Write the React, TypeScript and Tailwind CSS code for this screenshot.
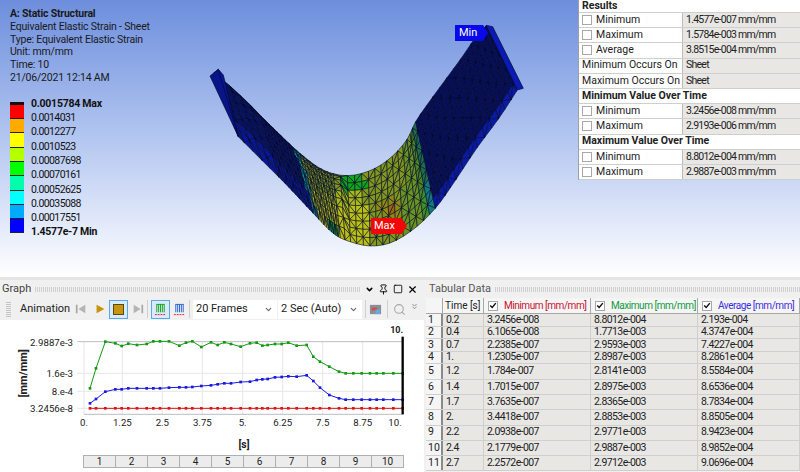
import React from 'react';
import { Pin, Square, X, ChevronDown, ChevronsDown, Search } from 'lucide-react';

const FONT = "font-['Roboto',sans-serif]";

const LEGEND = [
  { color: '#ff0000', label: '0.0015784 Max', bold: true },
  { color: '#ffaa00', label: '0.0014031' },
  { color: '#ffff00', label: '0.0012277' },
  { color: '#b4ff00', label: '0.0010523' },
  { color: '#00ff00', label: '0.00087698' },
  { color: '#00ffaa', label: '0.00070161' },
  { color: '#00ffff', label: '0.00052625' },
  { color: '#00aaff', label: '0.00035088' },
  { color: '#0000ff', label: '0.00017551' },
  { color: null, label: '1.4577e-7 Min', bold: true },
];

type ResultRow = { kind: 'head'; label: string } | { kind: 'check' | 'plain'; label: string; value: string };

const RESULTS: ResultRow[] = [
  { kind: 'head', label: 'Results' },
  { kind: 'check', label: 'Minimum', value: '1.4577e-007 mm/mm' },
  { kind: 'check', label: 'Maximum', value: '1.5784e-003 mm/mm' },
  { kind: 'check', label: 'Average', value: '3.8515e-004 mm/mm' },
  { kind: 'plain', label: 'Minimum Occurs On', value: 'Sheet' },
  { kind: 'plain', label: 'Maximum Occurs On', value: 'Sheet' },
  { kind: 'head', label: 'Minimum Value Over Time' },
  { kind: 'check', label: 'Minimum', value: '3.2456e-008 mm/mm' },
  { kind: 'check', label: 'Maximum', value: '2.9193e-006 mm/mm' },
  { kind: 'head', label: 'Maximum Value Over Time' },
  { kind: 'check', label: 'Minimum', value: '8.8012e-004 mm/mm' },
  { kind: 'check', label: 'Maximum', value: '2.9887e-003 mm/mm' },
];

const TABLE = [
  ['0.2', '3.2456e-008', '8.8012e-004', '2.193e-004'],
  ['0.4', '6.1065e-008', '1.7713e-003', '4.3747e-004'],
  ['0.7', '2.2385e-007', '2.9593e-003', '7.4227e-004'],
  ['1.', '1.2305e-007', '2.8987e-003', '8.2861e-004'],
  ['1.2', '1.784e-007', '2.8141e-003', '8.5584e-004'],
  ['1.4', '1.7015e-007', '2.8975e-003', '8.6536e-004'],
  ['1.7', '3.7635e-007', '2.8365e-003', '8.7834e-004'],
  ['2.', '3.4418e-007', '2.8853e-003', '8.8505e-004'],
  ['2.2', '2.0938e-007', '2.9771e-003', '8.9423e-004'],
  ['2.4', '2.1779e-007', '2.9887e-003', '8.9852e-004'],
  ['2.7', '2.2572e-007', '2.9712e-003', '9.0696e-004'],
];

// mesh outline, in 3x crop coords (origin 190,20)
const TOP = [[72,158],[150,225],[240,315],[330,400],[400,450],[470,467],[540,452],[600,415],[650,360],[680,300],[740,215],[810,120],[860,48],[890,16]];
const BOT = [[145,350],[215,420],[290,495],[370,580],[430,640],[480,665],[545,678],[610,665],[680,620],[740,560],[790,490],[860,385],[930,290],[985,205]];

function along(line: number[][], t: number) {
  const n = line.length - 1;
  const i = Math.min(Math.floor(t), n - 1);
  const f = t - i;
  const p0 = line[Math.max(i - 1, 0)];
  const p1 = line[i];
  const p2 = line[i + 1];
  const p3 = line[Math.min(i + 2, n)];
  const cr = (k: number) =>
    0.5 * (2 * p1[k] + (p2[k] - p0[k]) * f + (2 * p0[k] - 5 * p1[k] + 4 * p2[k] - p3[k]) * f * f + (3 * p1[k] - p0[k] - 3 * p2[k] + p3[k]) * f * f * f);
  return [cr(0), cr(1)];
}

function meshColor(t: number, v: number, x: number, y: number) {
  if (t < 2.7 + v * 0.3) return v > 0.76 ? '#08169a' : '#071266';
  if (t > 9.05) return v > 0.84 ? '#0a1aa8' : '#070f58';
  if (t < 2.9 + v * 0.35) return v > 0.75 ? '#107e86' : '#128c8c';
  if (t > 8.75) return v > 0.72 ? '#127a80' : '#1e6e4c';
  if (t > 8.3) return v > 0.7 ? '#3f8f28' : '#4a8420';
  const hot = Math.hypot(x - 600, y - 565);
  if (hot < 16) return '#a0640e';
  if (hot < 34) return '#8e8a12';
  if (Math.hypot(x - 495, y - 497) < 40 && y < 515) return '#12a41c';
  if (x < 445 && y > 610) return '#159a2c';
  if (y > 555 && x < 545) return '#bcc010';
  if (y > 520 && x < 520) return '#a8b814';
  if (x > 640) return '#6a9420';
  return '#82981c';
}

function buildMesh() {
  const tris: { pts: string; fill: string }[] = [];
  const ts: number[] = [];
  // elements get tighter around the left bend
  for (let t = 0; t < 12.85; t += t < 1.6 ? 0.34 : t < 4.4 ? 0.13 : 0.3) ts.push(t);
  ts.push(13);
  const nv = 9;
  const grid = (i: number, j: number) => {
    const a = along(TOP, ts[i]);
    const b = along(BOT, ts[i]);
    const dense = ts[i] < 5;
    const v = dense ? Math.pow(j / nv, 1.7) : j / nv;
    return [a[0] + (b[0] - a[0]) * v, a[1] + (b[1] - a[1]) * v];
  };
  for (let i = 0; i < ts.length - 1; i++) {
    for (let j = 0; j < nv; j++) {
      const p = grid(i, j);
      const q = grid(i + 1, j);
      const r = grid(i + 1, j + 1);
      const s = grid(i, j + 1);
      const t = (ts[i] + ts[i + 1]) / 2;
      const v = (j + 0.5) / nv;
      const fill = meshColor(t, v, (p[0] + r[0]) / 2, (p[1] + r[1]) / 2);
      const flip = (i + j) % 2 === 0;
      const a = flip ? [p, q, r] : [p, q, s];
      const b = flip ? [p, r, s] : [q, r, s];
      tris.push({ pts: a.map((c) => c.join(',')).join(' '), fill });
      tris.push({ pts: b.map((c) => c.join(',')).join(' '), fill });
    }
  }
  return tris;
}

const MESH = buildMesh();

const Mesh = () => (
  <svg className="absolute left-[190px] top-[20px] w-[350px] h-[240px]" viewBox="0 0 1050 720">
    {MESH.map((t, i) => (
      <polygon key={i} points={t.pts} fill={t.fill} stroke="#03082a" strokeWidth="2" strokeOpacity="0.9" />
    ))}
    <polygon points="72,158 85,148 100,165 145,350" fill="#08169a" stroke="#03082a" strokeWidth="2" />
    <polygon points="60,168 85,148 145,350" fill="#081488" stroke="#03082a" strokeWidth="2" />
    <polygon points="888,16 908,20 1000,205 982,210" fill="#0a1ab4" stroke="#03082a" strokeWidth="2" />
  </svg>
);

const CHART_X = [270,288,316,346,365,385,411,440,460,480,507,538,558,577,604,633,653,673,693,722,750,770,787,803,825,845,865,890,920,940,960,988,1017,1037,1060,1085,1110,1130,1150,1180,1208];
const GREEN = [190,130,50,55,63,56,60,57,49,49,49,62,53,49,66,52,60,52,57,65,55,53,62,60,57,57,53,62,60,95,110,125,140,145,145,145,145,145,145,145,145];
const BLUE = [235,222,200,193,193,190,190,190,190,190,188,187,187,186,183,181,178,175,175,171,170,165,163,162,157,156,154,155,151,168,188,210,220,224,224,224,224,224,224,224,224];

const Series = ({ ys, color }: { ys: number[]; color: string }) => (
  <g>
    <polyline points={CHART_X.map((x, i) => `${x},${ys[i]}`).join(' ')} fill="none" stroke={color} strokeWidth="3" />
    {CHART_X.map((x, i) => (
      <rect key={i} x={x - 4} y={ys[i] - 4} width="8" height="8" fill={color} />
    ))}
  </g>
);

const Chart = () => {
  const xticks: [number, string][] = [[252,'0.'],[367,'1.25'],[487,'2.5'],[607,'3.75'],[728,'5.'],[848,'6.25'],[968,'7.5'],[1088,'8.75'],[1185,'10.']];
  const xgrid = [252, 367, 487, 607, 728, 848, 968, 1088, 1208];
  const yticks: [number, string][] = [[50,'2.9887e-3'],[145,'1.6e-3'],[199,'8.e-4'],[250,'3.2456e-8']];
  return (
    <svg className="w-[424px] h-[128px] shrink-0 mt-[5px]" viewBox="0 0 1272 384">
      <g fontFamily="Roboto, sans-serif" fontSize="29" fill="#222">
        {xgrid.map((x) => (
          <line key={x} x1={x} x2={x} y1="50" y2="268" stroke="#e6e6e6" strokeWidth="3" />
        ))}
        {yticks.map(([y, l]) => (
          <g key={l}>
            <line x1="232" x2="1208" y1={y} y2={y} stroke={y === 50 ? '#bdbdbd' : '#e6e6e6'} strokeWidth="3" />
            <text x="219" y={y + 12} textAnchor="end">{l}</text>
          </g>
        ))}
        <line x1="252" x2="1208" y1="268" y2="268" stroke="#bdbdbd" strokeWidth="3" />
        {xticks.map(([x, l]) => (
          <text key={l} x={x} y="304" textAnchor="middle">{l}</text>
        ))}
        <text x="732" y="368" textAnchor="middle" fontWeight="700" fontSize="31">[s]</text>
        <text x="82" y="145" textAnchor="middle" fontWeight="700" fontSize="33" transform="rotate(-90 82 145)">[mm/mm]</text>
        <text x="1190" y="24" textAnchor="middle" fontWeight="700" fontSize="27">10.</text>
      </g>
      <Series ys={GREEN} color="#129a12" />
      <Series ys={BLUE} color="#1a1ae0" />
      <Series ys={CHART_X.map(() => 250)} color="#e01414" />
      <line x1="1208" x2="1208" y1="35" y2="268" stroke="#000" strokeWidth="7" />
    </svg>
  );
};

const Check = ({ on }: { on?: boolean }) => (
  <span className="w-[10px] h-[10px] border border-[#a8a8a8] bg-white shrink-0 flex items-center justify-center">
    {on && (
      <svg viewBox="0 0 10 10" className="w-[9px] h-[9px]">
        <path d="M1.5 5 L4 7.5 L8.5 2" fill="none" stroke="#111" strokeWidth="1.8" />
      </svg>
    )}
  </span>
);

const Grip = () => (
  <div className="flex-1 h-[5px] bg-[repeating-linear-gradient(90deg,#d0d0d0_0_1px,#f0f0f0_1px_2px)]" />
);

const ToolSep = () => <div className="w-px h-[18px] bg-[#cfcfcf] mx-[3px]" />;

const BarsIcon = ({ stroke }: { stroke: string }) => (
  <svg viewBox="0 0 14 14" className="w-[13px] h-[13px]">
    <path d="M2.5 1.5 H11.5 M3 1.5 V10 M7 1.5 V10 M11 1.5 V10 M5 1.5 V10 M9 1.5 V10" stroke={stroke} fill="none" />
    <path d="M1 12.5 H13" stroke="#e01414" strokeDasharray="2 1" fill="none" />
  </svg>
);

const Toolbar = () => (
  <div className="h-[22px] flex items-center pl-[6px] text-[11px] text-[#222]">
    <div className="w-[5px] h-[16px] bg-[repeating-linear-gradient(0deg,#c4c4c4_0_1px,#f0f0f0_1px_2px)] mr-[9px]" />
    <span className="w-[55px]">Animation</span>
    <svg viewBox="0 0 14 14" className="w-[12px] h-[12px] mr-[8px]">
      <rect x="1" y="2" width="2" height="10" fill="#a8a8a8" />
      <path d="M12 2 V12 L4 7 Z" fill="#b4b4b4" />
    </svg>
    <svg viewBox="0 0 14 14" className="w-[11px] h-[14px] mr-[3px]">
      <path d="M2 1.5 V12.5 L12 7 Z" fill="#c8920c" />
    </svg>
    <div className="w-[19px] h-[19px] border border-[#5aa6e6] bg-[#d8ebfa] flex items-center justify-center mr-[4px]">
      <div className="w-[11px] h-[11px] bg-[#c8960e] border border-[#5a4a10]" />
    </div>
    <svg viewBox="0 0 14 14" className="w-[12px] h-[12px]">
      <path d="M2 2 V12 L10 7 Z" fill="#b4b4b4" />
      <rect x="11" y="2" width="2" height="10" fill="#a8a8a8" />
    </svg>
    <ToolSep />
    <div className="w-[19px] h-[19px] border border-[#5aa6e6] bg-[#d8ebfa] flex items-center justify-center mr-[3px]">
      <BarsIcon stroke="#12a012" />
    </div>
    <BarsIcon stroke="#2060d0" />
    <ToolSep />
    <div className="w-[84px] h-[19px] bg-white flex items-center justify-between pl-[3px] pr-[4px]">
      <span>20 Frames</span>
      <ChevronDown size={9} strokeWidth={3} className="text-[#666]" />
    </div>
    <div className="w-[84px] h-[19px] bg-white flex items-center justify-between pl-[3px] pr-[4px] ml-px">
      <span>2 Sec (Auto)</span>
      <ChevronDown size={9} strokeWidth={3} className="text-[#666]" />
    </div>
    <ToolSep />
    <svg viewBox="0 0 14 14" className="w-[13px] h-[13px] mr-[2px]">
      <rect x="1" y="2" width="12" height="10" fill="#8a8f96" />
      <rect x="3" y="5" width="6" height="3" fill="#d84a4a" />
      <rect x="7" y="7" width="5" height="5" fill="#6aa8e0" />
    </svg>
    <ToolSep />
    <Search size={13} className="text-[#a8a8a8] ml-[2px]" />
    <ChevronsDown size={9} className="text-[#777] ml-[4px] -mt-[6px]" />
  </div>
);

const Graph = () => (
  <div className="w-[424px] flex flex-col bg-[#f0f0f0] shrink-0">
    <div className="h-[18px] flex items-center gap-[4px] pl-[2px] pr-[6px] text-[11px] text-[#444]">
      <span>Graph</span>
      <Grip />
      <ChevronDown size={9} strokeWidth={4} className="text-black" />
      <Pin size={11} className="text-black" />
      <Square size={10} className="text-black" />
      <X size={11} strokeWidth={2.5} className="text-black" />
    </div>
    <Toolbar />
    <div className="flex-1 bg-white flex flex-col overflow-hidden">
      <Chart />
      <div className="flex ml-[83px] w-[321px] h-[13px] border border-[#b0b0b0] bg-[#ececec] mt-[2px]">
        {[1, 2, 3, 4, 5, 6, 7, 8, 9, 10].map((n) => (
          <div key={n} className="flex-1 flex items-center justify-center text-[10px] text-[#222] border-r border-[#b0b0b0] last:border-r-0">
            {n}
          </div>
        ))}
      </div>
    </div>
  </div>
);

const TabularData = () => {
  const cols = 'grid grid-cols-[17px_41px_107px_107px_1fr]';
  const Head = ({ label, color }: { label: string; color: string }) => (
    <div className="flex items-center gap-[6px] pl-[4px] border-r border-[#a8a8a8] whitespace-nowrap">
      <Check on />
      <span className={color}>{label}</span>
    </div>
  );
  return (
    <div className="flex-1 flex flex-col bg-[#f0f0f0] ml-[2px] min-w-0">
      <div className="h-[18px] flex items-center gap-[4px] pl-[3px] text-[11px] text-[#555]">
        <span>Tabular Data</span>
        <Grip />
      </div>
      <div className={`${cols} h-[16px] bg-[#f5f5f5] text-[10px] tracking-[-0.45px] text-[#222] border-b border-[#a8a8a8]`}>
        <div className="border-r border-[#a8a8a8]" />
        <div className="flex items-center pl-[2px] border-r border-[#a8a8a8] whitespace-nowrap tracking-normal">Time [s]</div>
        <Head label="Minimum [mm/mm]" color="text-[#c8102e]" />
        <Head label="Maximum [mm/mm]" color="text-[#0e9a3a]" />
        <Head label="Average [mm/mm]" color="text-[#3a2ee0]" />
      </div>
      {TABLE.map((row, i) => (
        <div key={i} className={`${cols} ${i < 4 ? 'h-[12.6px]' : 'h-[15.3px]'} text-[10.5px] text-[#222] border-b border-[#cfcfcf] items-center`}>
          <div className="pl-[2px] leading-none bg-[#f5f5f5] h-full flex items-center border-r-2 border-[#8a8a8a]">{i + 1}</div>
          {row.map((c, j) => (
            <div key={j} className="pl-[3px] h-full flex items-center bg-[#e8e7e4] border-r border-[#cfcfcf] leading-none tracking-[-0.6px]">{c}</div>
          ))}
        </div>
      ))}
    </div>
  );
};

const ResultsPanel = () => (
  <div className="absolute right-0 top-0 w-[222px] flex flex-col bg-white text-[10.5px] text-[#222] border-l border-[#a0a0a0]">
    {RESULTS.map((r, i) =>
      r.kind === 'head' ? (
        <div key={i} className={`${i === 0 ? 'h-[13px]' : 'h-[15.2px]'} flex items-center pl-[3px] font-bold border-b border-[#cfcfcf] leading-none`}>{r.label}</div>
      ) : (
        <div key={i} className="h-[15.2px] flex border-b border-[#cfcfcf] leading-none">
          <div className="w-[104px] shrink-0 flex items-center gap-[4px] pl-[3px] border-r border-[#bcbcbc] whitespace-nowrap">
            {r.kind === 'check' && <Check />}
            {r.label}
          </div>
          <div className="flex-1 flex items-center pl-[3px] bg-[#e8e7e4] tracking-[-0.75px]">{r.value}</div>
        </div>
      ),
    )}
  </div>
);

const Legend = () => (
  <div className="flex flex-col mt-[17px] ml-[10px]">
    <div className="w-[14px] h-[3px] bg-[#111]" />
    {LEGEND.map((l) => (
      <div key={l.label} className={`flex ${l.color ? 'h-[14.3px]' : 'h-[8px]'}`}>
        {l.color ? (
          <div className="w-[14px] h-full border-b border-[#222] shrink-0" style={{ background: l.color }} />
        ) : (
          <div className="w-[14px] shrink-0" />
        )}
        <span className={`ml-[7px] text-[10.5px] leading-none -mt-[6px] h-[11px] text-[#111] ${l.bold ? 'font-bold tracking-[-0.25px]' : 'tracking-[-0.6px]'}`}>
          {l.label}
        </span>
      </div>
    ))}
  </div>
);

export default function App() {
  return (
    <div className={`w-[800px] h-[472px] flex flex-col overflow-hidden relative bg-[#f0f0f0] ${FONT}`}>
      <div className="h-[277px] shrink-0 relative bg-linear-to-b from-[#6d8edd] to-white">
        <div className="pt-[8px] pl-[10px] text-[10.5px] leading-[12.8px] text-[#1a1a1a] tracking-[-0.2px]">
          <div className="font-bold">A: Static Structural</div>
          <div>Equivalent Elastic Strain - Sheet</div>
          <div>Type: Equivalent Elastic Strain</div>
          <div>Unit: mm/mm</div>
          <div>Time: 10</div>
          <div>21/06/2021 12:14 AM</div>
        </div>
        <Legend />
        <Mesh />
        <div className="absolute left-[455px] top-[25px] h-[16px] w-[33px] bg-[#0808e8] text-white text-[11px] pl-[4px] flex items-center [clip-path:polygon(0_0,85%_0,100%_50%,85%_100%,0_100%)]">Min</div>
        <div className="absolute left-[371px] top-[218px] h-[16px] w-[36px] bg-[#f00808] text-white text-[11px] pl-[3px] flex items-center [clip-path:polygon(0_0,85%_0,100%_50%,85%_100%,0_100%)]">Max</div>
        <ResultsPanel />
      </div>
      <div className="h-[3px] shrink-0 bg-[#e4e4e4]" />
      <div className="flex-1 flex min-h-0">
        <Graph />
        <TabularData />
      </div>
    </div>
  );
}
